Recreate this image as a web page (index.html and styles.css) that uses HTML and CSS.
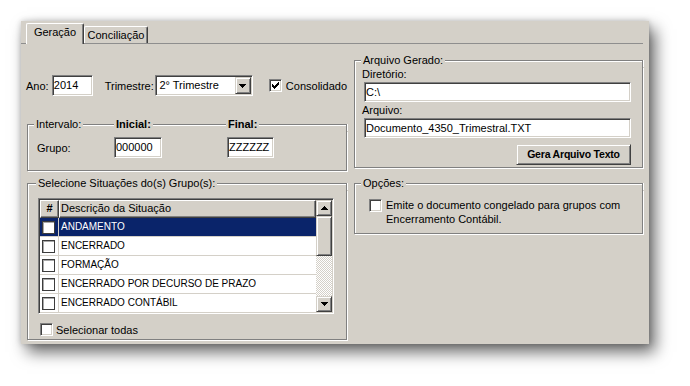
FILE: index.html
```html
<!DOCTYPE html>
<html lang="pt-BR">
<head>
<meta charset="utf-8">
<title>Geração</title>
<link rel="stylesheet" href="styles.css">
</head>
<body>
<div class="stage">
  <div class="panel">
    <div class="tabs">
      <div class="tab active">Geração</div>
      <div class="tab">Conciliação</div>
    </div>
    <div class="content">
      <div class="col-left">
        <div class="ano-row">
          <span class="lbl-ano">Ano:</span>
          <div class="field f-ano">2014</div>
          <span class="lbl-tri">Trimestre:</span>
          <div class="combo">
            <span class="combo-text">2° Trimestre</span>
            <span class="btn3d combo-btn"><svg width="7" height="4" viewBox="0 0 7 4" shape-rendering="crispEdges"><path d="M0 0H7V1H6V2H5V3H4V4H3V3H2V2H1V1H0Z" fill="#000"/></svg></span>
          </div>
          <span class="chk chk-consol"><svg width="9" height="9" viewBox="0 0 9 9" shape-rendering="crispEdges"><path d="M7 1H8V4H7V5H6V6H5V7H4V8H3V7H2V6H1V3H2V4H3V5H4V4H5V3H6V2H7Z" fill="#000"/></svg></span>
          <span class="chk-label">Consolidado</span>
        </div>

        <div class="group g-intervalo">
          <div class="ghead">
            <div class="hseg hseg-a"><span class="gtitle">Intervalo:</span><span class="hline"></span></div>
            <div class="hseg hseg-b"><span class="gtitle bold">Inicial:</span><span class="hline"></span></div>
            <span class="gtitle bold">Final:</span>
          </div>
          <div class="gbody intervalo-body">
            <span>Grupo:</span>
            <div class="field f-grp">000000</div>
            <div class="field f-grp2">ZZZZZZ</div>
          </div>
        </div>
      </div>

      <div class="group g-arquivo">
        <div class="ghead"><span class="gtitle">Arquivo Gerado:</span></div>
        <div class="gbody arquivo-body">
          <div class="flabel">Diretório:</div>
          <div class="field f-wide">C:\</div>
          <div class="flabel flabel-2">Arquivo:</div>
          <div class="field f-wide">Documento_4350_Trimestral.TXT</div>
          <div class="btn-row"><div class="btn3d btn-gera">Gera Arquivo Texto</div></div>
        </div>
      </div>

      <div class="group g-situacoes">
        <div class="ghead"><span class="gtitle">Selecione Situações do(s) Grupo(s):</span></div>
        <div class="gbody situacoes-body">
          <div class="grid">
            <div class="gdata">
              <div class="ghrow">
                <div class="gh gh-num">#</div>
                <div class="gh gh-desc">Descrição da Situação</div>
              </div>
              <div class="gr sel"><div class="gc-chk"><span class="chk flat"></span></div><div class="gc-txt">ANDAMENTO</div></div>
              <div class="gr"><div class="gc-chk"><span class="chk flat"></span></div><div class="gc-txt">ENCERRADO</div></div>
              <div class="gr"><div class="gc-chk"><span class="chk flat"></span></div><div class="gc-txt">FORMAÇÃO</div></div>
              <div class="gr"><div class="gc-chk"><span class="chk flat"></span></div><div class="gc-txt">ENCERRADO POR DECURSO DE PRAZO</div></div>
              <div class="gr"><div class="gc-chk"><span class="chk flat"></span></div><div class="gc-txt">ENCERRADO CONTÁBIL</div></div>
            </div>
            <div class="vscroll">
              <div class="btn3d sb-btn"><svg width="7" height="4" viewBox="0 0 7 4" shape-rendering="crispEdges"><path d="M3 0H4V1H5V2H6V3H7V4H0V3H1V2H2V1H3Z" fill="#000"/></svg></div>
              <div class="btn3d sb-thumb"></div>
              <div class="sb-track"></div>
              <div class="btn3d sb-btn"><svg width="7" height="4" viewBox="0 0 7 4" shape-rendering="crispEdges"><path d="M0 0H7V1H6V2H5V3H4V4H3V3H2V2H1V1H0Z" fill="#000"/></svg></div>
            </div>
          </div>
          <div class="sel-all"><span class="chk"></span><span class="chk-label">Selecionar todas</span></div>
        </div>
      </div>

      <div class="group g-opcoes">
        <div class="ghead"><span class="gtitle">Opções:</span></div>
        <div class="gbody opcoes-body">
          <span class="chk"></span>
          <span class="opt-text">Emite o documento congelado para grupos com<br>Encerramento Contábil.</span>
        </div>
      </div>
    </div>
  </div>
</div>
</body>
</html>
```

FILE: styles.css
```css
* { box-sizing: border-box; }

html, body { margin: 0; }

body {
  background: #fff;
  width: 690px;
  height: 386px;
  overflow: hidden;
  font-family: "Liberation Sans", Arial, sans-serif;
  font-size: 11px;
  color: #000;
}

.stage { padding: 21px 0 0 21px; }

.panel {
  width: 628px;
  height: 323px;
  background: #d4d0c8;
  box-shadow: 6px 8px 15px rgba(0, 0, 0, 0.6), 0 0 6px rgba(0, 0, 0, 0.2);
}

/* tabs */
.tabs {
  display: flex;
  align-items: flex-end;
  height: 23px;
  margin-right: 6px;
  padding-left: 5px;
  border-bottom: 1px solid #8e8e8e;
}

.tab {
  width: 64px;
  height: 17px;
  padding-top: 1px;
  line-height: 14px;
  text-align: center;
  background: #d4d0c8;
  border-top: 1px solid #fff;
  border-left: 1px solid #fff;
  border-right: 1px solid #404040;
  border-radius: 2px 2px 0 0;
  box-shadow: inset -1px 0 0 #808080;
}

.tab.active {
  position: relative;
  width: 58px;
  height: 21px;
  margin-bottom: -1px;
  padding-top: 2px;
  line-height: 13px;
}

/* content grid */
.content {
  display: grid;
  grid-template-columns: 320px 289px;
  column-gap: 7px;
  row-gap: 6px;
  align-items: start;
  padding: 10px 0 0 6px;
}

.col-left { display: flex; flex-direction: column; }

/* 3d primitives */
.field {
  height: 21px;
  padding-left: 1px;
  line-height: 19px;
  background: #fff;
  border: 1px solid;
  border-color: #808080 #fff #fff #808080;
  box-shadow: inset 1px 1px 0 #404040, inset -1px -1px 0 #d4d0c8;
  white-space: nowrap;
  overflow: hidden;
}

.btn3d {
  background: #d4d0c8;
  border: 1px solid;
  border-color: #d4d0c8 #404040 #404040 #d4d0c8;
  box-shadow: inset 1px 1px 0 #fff, inset -1px -1px 0 #808080;
}

.chk {
  flex: none;
  display: flex;
  align-items: center;
  justify-content: center;
  width: 13px;
  height: 13px;
  background: #fff;
  border: 1px solid;
  border-color: #808080 #fff #fff #808080;
  box-shadow: inset 1px 1px 0 #404040, inset -1px -1px 0 #d4d0c8;
}

.chk.flat {
  border-color: #3c3c3c;
  box-shadow: inset 1px 1px 0 #a8a8a8;
}

/* ano row */
.ano-row {
  display: flex;
  align-items: center;
  height: 21px;
  margin-top: 21px;
  margin-left: -1px;
}

.lbl-ano { width: 26px; }
.f-ano { width: 41px; }
.lbl-tri { width: 51px; margin-left: 12px; }

.combo {
  display: flex;
  width: 98px;
  height: 21px;
  padding: 1px;
  background: #fff;
  border: 1px solid;
  border-color: #808080 #fff #fff #808080;
  box-shadow: inset 1px 1px 0 #404040, inset -1px -1px 0 #d4d0c8;
}

.combo-text {
  flex: 1;
  padding-left: 2px;
  line-height: 17px;
}

.combo-btn {
  width: 16px;
  height: 17px;
  display: flex;
  align-items: center;
  justify-content: center;
}

.chk-consol { margin-left: 16px; }
.chk-label { margin-left: 4px; }

/* group boxes */
.group { display: flex; flex-direction: column; }

.ghead {
  display: flex;
  height: 13px;
  line-height: 13px;
}

.ghead::before {
  content: "";
  width: 6px;
  margin-top: 6px;
  border-top: 1px solid #808080;
  border-left: 1px solid #808080;
  box-shadow: inset 1px 1px 0 #fff;
}

.ghead::after {
  content: "";
  flex: 1;
  margin-top: 6px;
  border-top: 1px solid #808080;
  border-right: 1px solid #808080;
  box-shadow: inset 0 1px 0 #fff, 1px 0 0 #fff;
}

.gtitle { padding: 0 2px; white-space: nowrap; }
.bold { font-weight: bold; }

.hseg { display: flex; }
.hseg-a { width: 80px; }
.hseg-b { width: 112px; }

.hline {
  flex: 1;
  margin-top: 6px;
  border-top: 1px solid #808080;
  box-shadow: inset 0 1px 0 #fff;
}

.gbody {
  border: 1px solid #808080;
  border-top: 0;
  box-shadow: inset 1px 0 0 #fff, 1px 1px 0 #fff;
}

/* intervalo */
.g-intervalo { margin-top: 22px; }

.intervalo-body {
  display: grid;
  grid-template-columns: 77px 113px 48px;
  align-items: center;
  padding: 6px 0 12px 9px;
}

.f-grp { width: 48px; }
.f-grp2 { width: 47px; }

/* arquivo gerado */
.arquivo-body {
  display: flex;
  flex-direction: column;
  padding: 1px 11px 2px 9px;
}

.flabel { height: 13px; line-height: 13px; margin-left: -2px; }
.flabel-2 { margin-top: 2px; }

.f-wide { height: 20px; line-height: 18px; margin-top: 1px; }

.btn-row { display: flex; justify-content: flex-end; margin-top: 6px; }

.btn-gera {
  width: 115px;
  height: 21px;
  line-height: 19px;
  text-align: center;
  font-weight: bold;
  font-size: 10.5px;
  letter-spacing: -0.2px;
}

/* situacoes */
.g-situacoes .ghead::before { width: 8px; }

.situacoes-body { padding: 8px 12px 3px 10px; }

.grid {
  display: flex;
  width: 296px;
  height: 116px;
  padding: 1px;
  border: 1px solid;
  border-color: #808080 #fff #fff #808080;
  box-shadow: inset 1px 1px 0 #404040, inset -1px -1px 0 #d4d0c8;
}

.gdata {
  flex: 1;
  background: #fff;
  overflow: hidden;
}

.ghrow { display: flex; height: 18px; }

.gh {
  height: 18px;
  line-height: 15px;
  background: #d4d0c8;
  border-top: 1px solid #fff;
  border-left: 1px solid #fff;
  border-right: 1px solid #404040;
  border-bottom: 1px solid #404040;
  box-shadow: inset -1px -1px 0 #808080;
  white-space: nowrap;
}

.gh-num { width: 19px; text-align: center; font-weight: bold; }
.gh-desc { flex: 1; padding-left: 1px; }

.gr {
  display: flex;
  height: 19px;
  border-bottom: 1px solid #d4d0c8;
}

.gr.sel { background: #0a246a; color: #fff; }

.gc-chk {
  width: 19px;
  display: flex;
  align-items: center;
  padding-left: 2px;
  border-right: 1px solid #d4d0c8;
}

.gc-txt {
  flex: 1;
  padding-left: 2px;
  line-height: 18px;
  font-size: 10px;
  white-space: nowrap;
}

.vscroll {
  display: flex;
  flex-direction: column;
  width: 16px;
}

.sb-btn {
  height: 16px;
  display: flex;
  align-items: center;
  justify-content: center;
}

.sb-thumb { height: 40px; }

.sb-track {
  flex: 1;
  background-color: #d4d0c8;
  background-image: repeating-conic-gradient(#fff 0 25%, #d4d0c8 0 50%);
  background-size: 2px 2px;
}

.sel-all {
  display: flex;
  align-items: center;
  height: 13px;
  margin: 9px 0 0 2px;
}

.sel-all .chk-label { margin-left: 3px; }

/* opcoes */
.opcoes-body {
  display: flex;
  align-items: flex-start;
  padding: 8px 8px 7px 14px;
}

.opcoes-body .chk { margin-top: 1px; }

.opt-text {
  margin-left: 4px;
  line-height: 14px;
}
```
